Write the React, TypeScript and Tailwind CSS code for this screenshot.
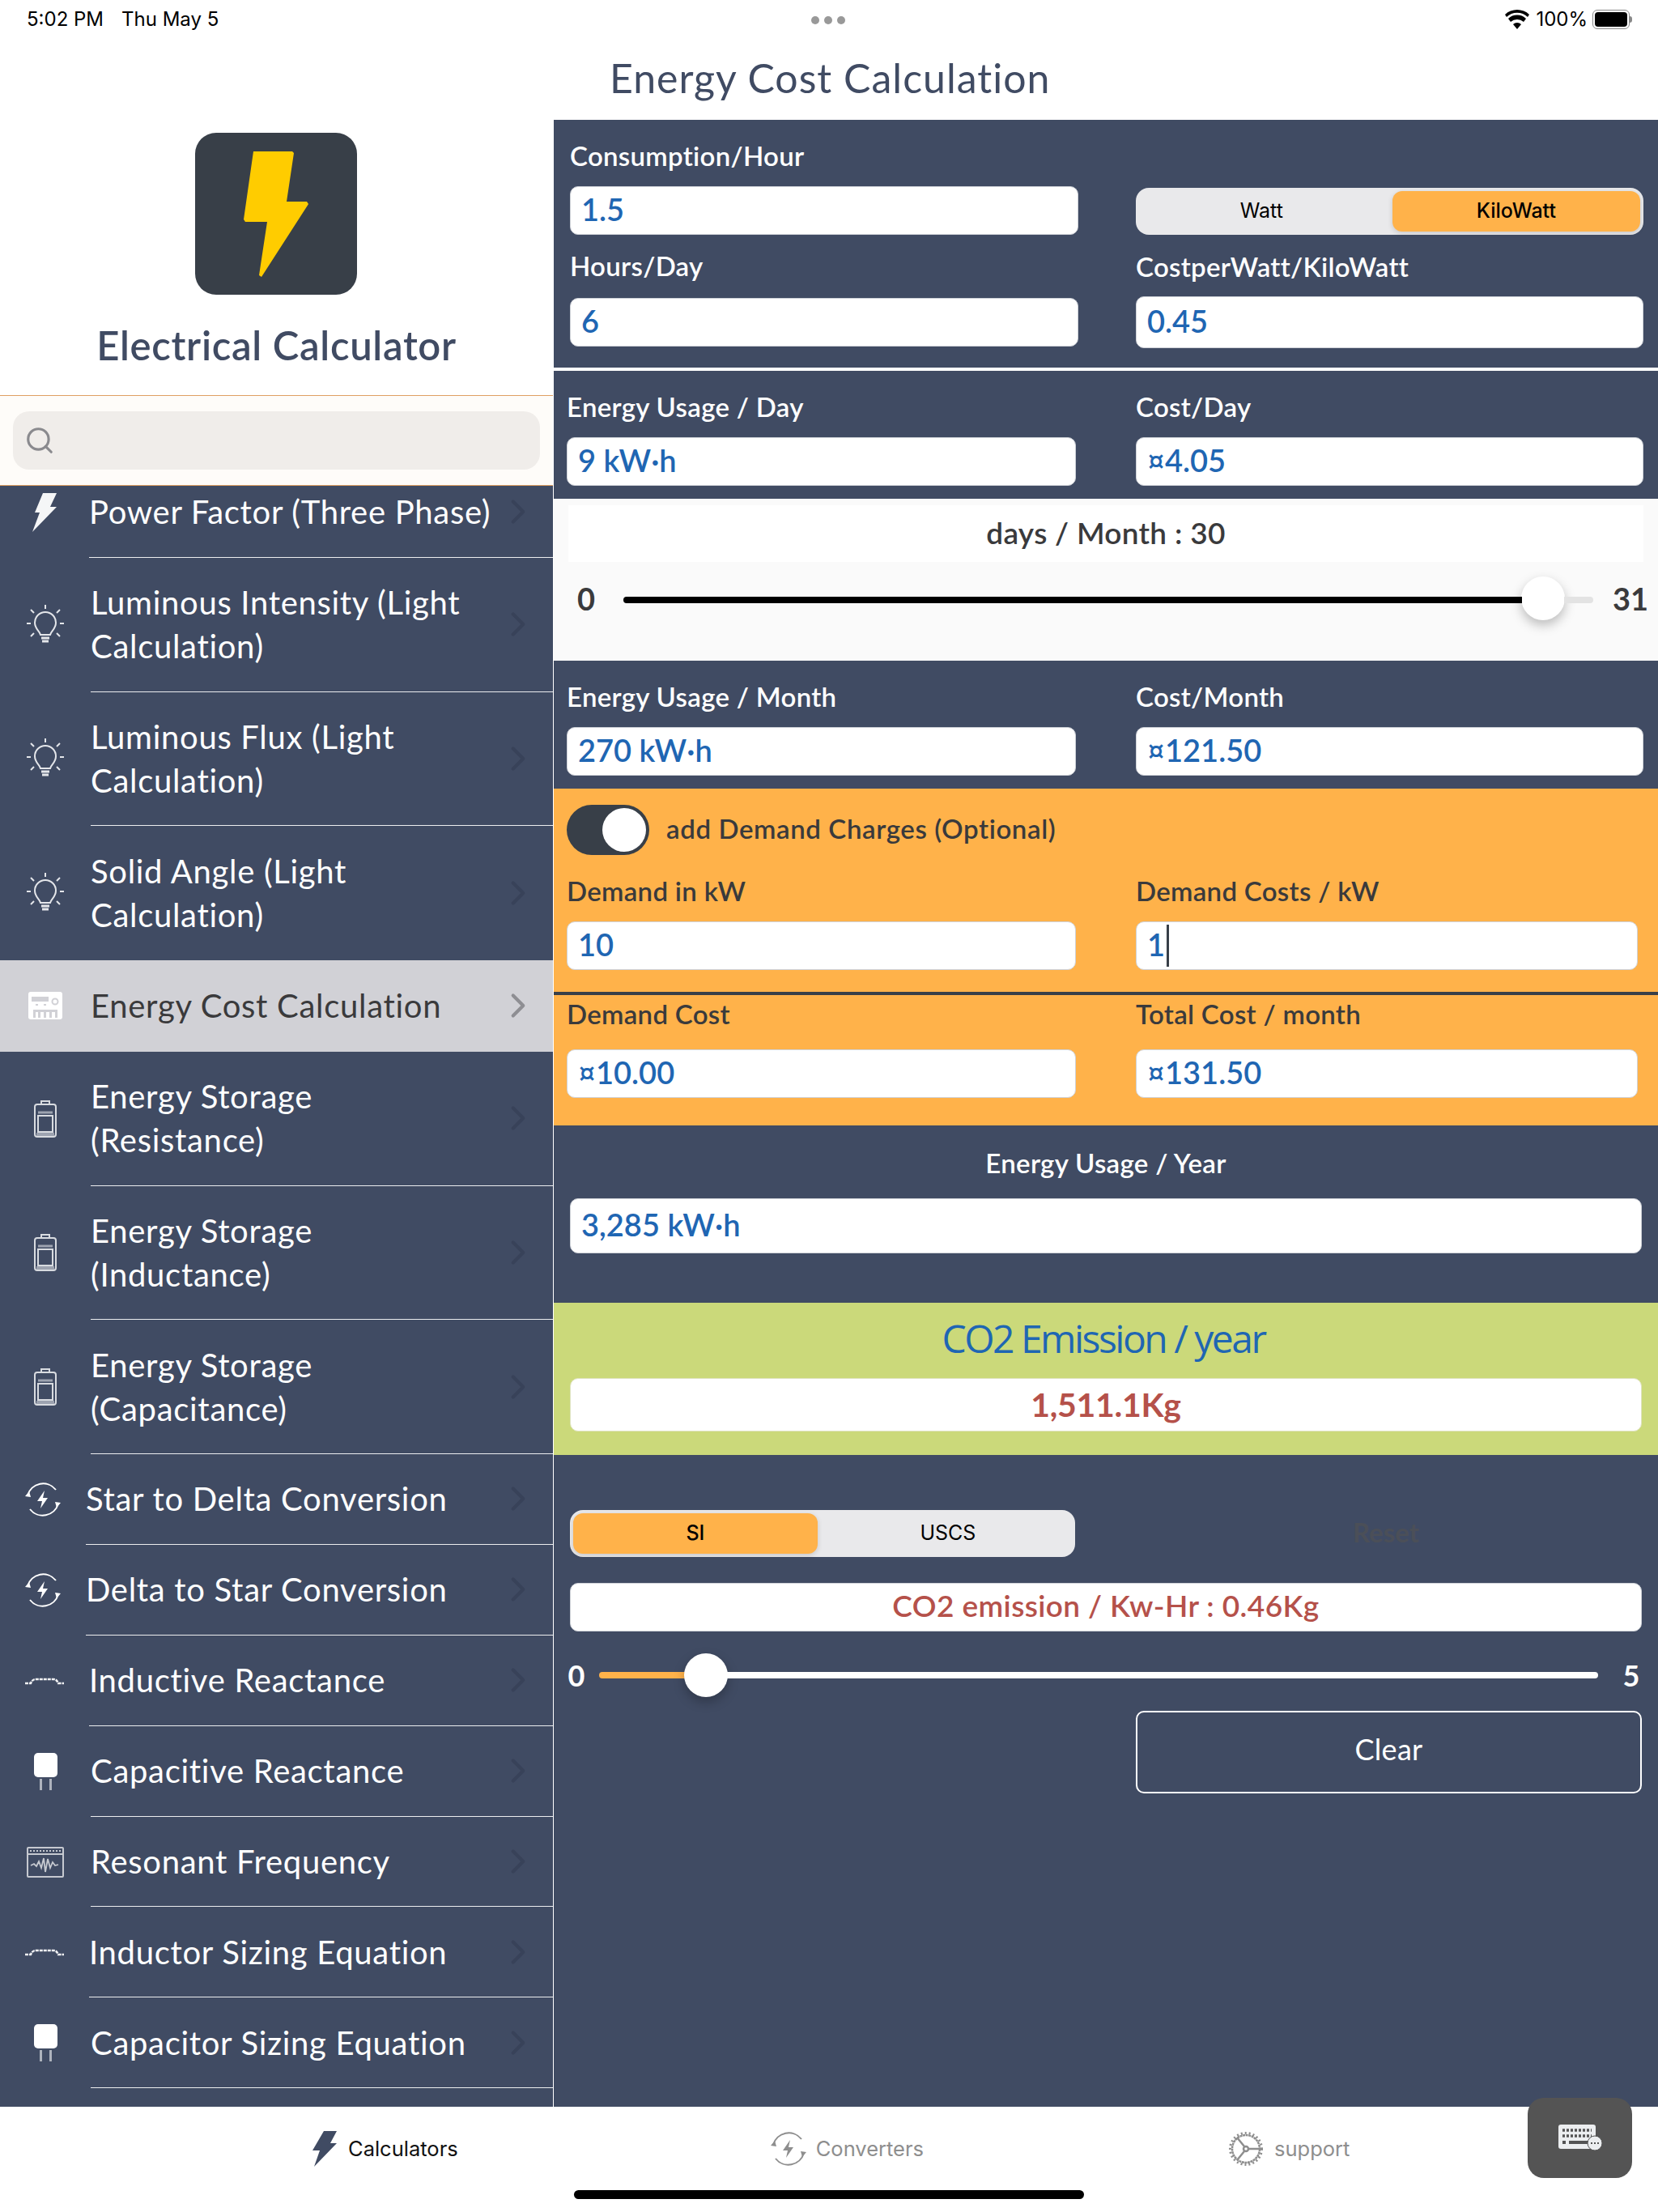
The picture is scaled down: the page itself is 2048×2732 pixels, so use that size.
import React from "react";
import { ChevronRight, Search } from "lucide-react";

const Bulb = () => (
  <svg width="46" height="50" viewBox="0 0 46 50" fill="none" stroke="#e4e6ea" strokeWidth="2">
    <path d="M17 37c-1-5-7-7-7-15a13 13 0 0 1 26 0c0 8-6 10-7 15z" />
    <path d="M18 41h10M19 45h8" strokeWidth="3" />
    <path d="M23 0v5M5 6l4 4M41 6l-4 4M0 23h5M41 23h5M5 39l4-4M41 39l-4-4" />
  </svg>
);

const Battery = () => (
  <svg width="28" height="46" viewBox="0 0 28 46" fill="none" stroke="#d8dbe0" strokeWidth="2">
    <path d="M9 5V1h10v4" />
    <rect x="1" y="5" width="26" height="40" rx="3" />
    <rect x="5" y="19" width="18" height="20" />
    <path d="M5 15h18" strokeWidth="3" stroke="#9da3b0" />
    <path d="M3 42h22" strokeWidth="4" stroke="#9da3b0" />
  </svg>
);

const Swap = ({ color = "#fff", size = 44 }: { color?: string; size?: number }) => (
  <svg width={size} height={size} viewBox="0 0 44 44" fill="none" stroke={color} strokeWidth="2">
    <path d="M3 17A20 20 0 0 1 38 10" />
    <path d="M41 27A20 20 0 0 1 6 34" />
    <path d="M0 18l5-6 2 7zM44 26l-5 6-2-7z" fill={color} stroke="none" />
    <path d="M24 11l-9 13h6l-2 9 9-13h-6z" fill={color} stroke="none" />
  </svg>
);

const Inductor = () => (
  <svg width="48" height="10" viewBox="0 0 48 10" fill="none" stroke="#f1f2f4" strokeWidth="2.5">
    <path d="M0 8h7q2-5 6-5h22q4 0 6 5h7" strokeDasharray="4 1" />
  </svg>
);

const Capacitor = () => (
  <svg width="29" height="46" viewBox="0 0 29 46">
    <rect x="0" y="0" width="29" height="30" rx="5" fill="#fff" />
    <rect x="7" y="32" width="3" height="14" fill="#aeb3bd" />
    <rect x="19" y="32" width="3" height="14" fill="#aeb3bd" />
  </svg>
);

const Wave = () => (
  <svg width="46" height="38" viewBox="0 0 46 38" fill="none" stroke="#c6c9d0" strokeWidth="2">
    <rect x="1" y="1" width="44" height="36" rx="1" />
    <path d="M2 9h42" />
    <path d="M4 5h38" strokeDasharray="2 2" />
    <path d="M5 23l4-2 3 3 3-6 3 8 3-12 2 17 3-16 3 11 3-7 3 4 4-1" strokeWidth="1.8" />
  </svg>
);

const Meter = () => (
  <svg width="42" height="34" viewBox="0 0 42 34">
    <rect width="42" height="34" rx="3" fill="#fff" />
    <rect x="4" y="6" width="21" height="6" fill="#d1d1d6" />
    <circle cx="33" cy="12" r="3.5" fill="none" stroke="#d1d1d6" strokeWidth="2" />
    <path d="M9 15h3v2H9zM19 15h3v2h-3z" fill="#d1d1d6" />
    <path d="M6 22h30v10h-3v-7h-4v7h-3v-7h-4v7h-3v-7h-4v7h-3v-7H9v7H6z" fill="#d1d1d6" />
  </svg>
);

const PowerBolt = () => (
  <svg width="30" height="48" viewBox="0 0 30 48">
    <path d="M13 0h17l-8 17h8L0 48l9-24H3z" fill="#fff" opacity="0.95" />
  </svg>
);

type Row = { label: React.ReactNode; icon: React.ReactNode; tall?: boolean; indent?: "wide" | "mid" | "narrow"; plain?: boolean };

const rows: Row[] = [
  { label: "Power Factor (Three Phase)", icon: <PowerBolt />, indent: "mid" },
  { label: <>Luminous Intensity (Light<br />Calculation)</>, icon: <Bulb />, tall: true },
  { label: <>Luminous Flux (Light<br />Calculation)</>, icon: <Bulb />, tall: true },
  { label: <>Solid Angle (Light<br />Calculation)</>, icon: <Bulb />, tall: true, plain: true },
];

const rowsAfter: Row[] = [
  { label: <>Energy Storage<br />(Resistance)</>, icon: <Battery />, tall: true },
  { label: <>Energy Storage<br />(Inductance)</>, icon: <Battery />, tall: true },
  { label: <>Energy Storage<br />(Capacitance)</>, icon: <Battery />, tall: true },
  { label: "Star to Delta Conversion", icon: <Swap />, indent: "narrow" },
  { label: "Delta to Star Conversion", icon: <Swap />, indent: "narrow" },
  { label: "Inductive Reactance", icon: <Inductor />, indent: "mid" },
  { label: "Capacitive Reactance", icon: <Capacitor /> },
  { label: "Resonant Frequency", icon: <Wave /> },
  { label: "Inductor Sizing Equation", icon: <Inductor />, indent: "mid" },
  { label: "Capacitor Sizing Equation", icon: <Capacitor /> },
];

function MenuRow({ row }: { row: Row }) {
  const iconBox = row.indent === "narrow" ? "w-[106px]" : row.indent === "mid" ? "w-[110px]" : "w-[112px]";
  return (
    <div className={`flex ${row.tall ? "h-[165.7px]" : "h-[111.9px]"}`}>
      <div className={`${iconBox} shrink-0 flex items-center justify-center`}>{row.icon}</div>
      <div className={`flex-1 flex items-center justify-between pr-[18px] ${row.plain ? "" : "border-b border-white/90"}`}>
        <div className="text-[40px] leading-[54px] tracking-[0.7px] text-white">{row.label}</div>
        <ChevronRight className="w-[50px] h-[50px] text-[#384259] shrink-0" strokeWidth={2} />
      </div>
    </div>
  );
}

function Sidebar() {
  return (
    <aside className="w-[683px] shrink-0 flex flex-col">
      <div className="h-[441px] flex flex-col items-center border-b border-[#dfa063] bg-white">
        <div className="mt-[116px] mr-[1px] w-[200px] h-[200px] rounded-[26px] bg-[#383f48] flex items-center justify-center">
          <svg width="80" height="156" viewBox="0 0 80 156">
            <path d="M12 1h48l2 2-9 60h25l2 3-58 90-3-2 10-66H2l-2-3z" fill="#ffcc00" />
          </svg>
        </div>
        <div className="mt-[30px] text-[49px] leading-[64px] font-semibold tracking-[0.7px] text-[#404b63]">Electrical Calculator</div>
      </div>
      <div className="h-[111px] bg-[#fefcf9] border-b border-[#dfa063] px-[16px] flex items-center">
        <div className="w-full h-[72px] rounded-[20px] bg-[#f0edea] flex items-center px-[14px]">
          <Search className="w-[38px] h-[38px] text-[#8a8a8e]" strokeWidth={2} />
        </div>
      </div>
      <div className="flex-1 overflow-hidden bg-[#404b63]">
        <div className="-mt-[23px]">
          {rows.map((r, i) => <MenuRow key={i} row={r} />)}
          <div className="flex h-[113px] bg-[#d1d1d6]">
            <div className="w-[112px] shrink-0 flex items-center justify-center"><Meter /></div>
            <div className="flex-1 flex items-center justify-between pr-[18px]">
              <div className="text-[40px] tracking-[0.7px] text-[#3a3a3c]">Energy Cost Calculation</div>
              <ChevronRight className="w-[50px] h-[50px] text-[#8e8e93] shrink-0" strokeWidth={2} />
            </div>
          </div>
          {rowsAfter.map((r, i) => <MenuRow key={i} row={r} />)}
        </div>
      </div>
    </aside>
  );
}

function Value({ children, className }: { children: React.ReactNode; className: string }) {
  return (
    <div className={`flex items-center rounded-[10px] bg-white border border-[#cfd2d8] pl-[13px] pb-[4px] text-[38px] font-semibold text-[#1f66b3] ${className}`}>
      {children}
    </div>
  );
}

function Label({ children, className = "text-white" }: { children: React.ReactNode; className?: string }) {
  return <div className={`h-[48px] pb-[3px] flex items-center text-[33px] font-semibold tracking-[0.3px] ${className}`}>{children}</div>;
}

function Segment({ left, right, active, className, onClass, offClass }: { left: string; right: string; active: "left" | "right"; className: string; onClass: string; offClass: string }) {
  const on = `${onClass} shrink-0 h-full flex items-center justify-center rounded-[12px] bg-[#ffb24a] text-black font-medium shadow-[0_2px_6px_rgba(0,0,0,0.15)]`;
  const off = `flex-1 h-full flex items-center justify-center text-black ${offClass}`;
  return (
    <div className={`flex items-center p-[4px] rounded-[16px] bg-[#e9e9eb] text-[25px] [font-family:Inter,sans-serif] ${className}`}>
      <div className={active === "left" ? on : off}>{left}</div>
      <div className={active === "right" ? on : off}>{right}</div>
    </div>
  );
}

function Thumb() {
  return <div className="w-[54px] h-[54px] rounded-full bg-white shrink-0 -mx-[1px] shadow-[0_6px_14px_rgba(0,0,0,0.25)]" />;
}

function Detail() {
  return (
    <main className="flex-1 flex flex-col min-w-0 ml-[1px]">
      <div className="h-[100px] flex items-center pl-[69px] pb-[4px] text-[50px] tracking-[1px] text-[#404b63]">Energy Cost Calculation</div>

      <section className="h-[306px] bg-[#404b63] flex pl-[20px] pt-[22px]">
        <div className="w-[628px]">
          <Label>Consumption/Hour</Label>
          <Value className="mt-[12px] h-[60px]">1.5</Value>
          <Label className="text-white mt-[16px]">Hours/Day</Label>
          <Value className="mt-[14px] h-[60px]">6</Value>
        </div>
        <div className="w-[627px] ml-[71px]">
          <Segment left="Watt" right="KiloWatt" active="right" className="mt-[62px] h-[58px]" onClass="w-[49.5%]" offClass="pr-[10px]" />
          <Label className="text-white mt-[17px]">CostperWatt/KiloWatt</Label>
          <Value className="mt-[11px] h-[64px]">0.45</Value>
        </div>
      </section>
      <div className="h-[4px] bg-white" />

      <section className="h-[158px] bg-[#404b63] flex pl-[16px] pt-[22px]">
        <div className="w-[629px]">
          <Label>Energy Usage / Day</Label>
          <Value className="mt-[12px] h-[60px]">9 kW·h</Value>
        </div>
        <div className="w-[627px] ml-[74px]">
          <Label>Cost/Day</Label>
          <Value className="mt-[12px] h-[60px]">¤4.05</Value>
        </div>
      </section>

      <section className="h-[200px] bg-[#fafafa] pt-[8px]">
        <div className="ml-[18px] w-[1328px] h-[70px] pb-[2px] bg-white flex items-center justify-center text-[37px] font-semibold tracking-[0.3px] text-[#3a3a3c]">days / Month : 30</div>
        <div className="flex items-center h-[90px] text-[38px] font-bold text-[#3a3a3c]">
          <div className="w-[78px] pl-[2px] text-center">0</div>
          <div className="w-[1206px] pl-[8px] flex items-center">
            <div className="flex-1 h-[8px] rounded-l-full bg-black translate-y-[2px]" />
            <Thumb />
            <div className="w-[36px] h-[8px] rounded-r-full bg-[#e3e3e3] translate-y-[2px]" />
          </div>
          <div className="flex-1 text-center pl-[12px]">31</div>
        </div>
      </section>

      <section className="h-[158px] bg-[#404b63] flex pl-[16px] pt-[22px]">
        <div className="w-[629px]">
          <Label>Energy Usage / Month</Label>
          <Value className="mt-[12px] h-[60px]">270 kW·h</Value>
        </div>
        <div className="w-[627px] ml-[74px]">
          <Label>Cost/Month</Label>
          <Value className="mt-[12px] h-[60px]">¤121.50</Value>
        </div>
      </section>

      <section className="h-[416px] bg-[#ffb24a] flex flex-col">
        <div className="flex items-center pl-[16px] pt-[20px]">
          <div className="w-[102px] h-[62px] rounded-full bg-[#383f48] flex items-center justify-end pr-[4px]">
            <div className="w-[54px] h-[54px] rounded-full bg-white" />
          </div>
          <div className="ml-[21px] pb-[2px] text-[33px] font-semibold tracking-[0.6px] text-[#3a3a3c]">add Demand Charges (Optional)</div>
        </div>
        <div className="flex pl-[16px] pt-[22px]">
          <div className="w-[629px]">
            <Label className="text-[#3a3a3c]">Demand in kW</Label>
            <Value className="mt-[12px] h-[60px]">10</Value>
          </div>
          <div className="w-[620px] ml-[74px]">
            <Label className="text-[#3a3a3c]">Demand Costs / kW</Label>
            <Value className="mt-[12px] h-[60px]">
              1<span className="ml-[2px] w-[3px] h-[52px] mt-[4px] bg-[#383f48]" />
            </Value>
          </div>
        </div>
        <div className="h-[4px] bg-[#383f48] mt-[27px]" />
        <div className="flex pl-[16px]">
          <div className="w-[629px]">
            <Label className="text-[#3a3a3c] mt-[1px]">Demand Cost</Label>
            <Value className="mt-[18px] h-[60px]">¤10.00</Value>
          </div>
          <div className="w-[620px] ml-[74px]">
            <Label className="text-[#3a3a3c] mt-[1px]">Total Cost / month</Label>
            <Value className="mt-[18px] h-[60px]">¤131.50</Value>
          </div>
        </div>
      </section>

      <section className="h-[219px] bg-[#404b63] flex flex-col pt-[24px] px-[20px]">
        <Label className="text-white justify-center">Energy Usage / Year</Label>
        <Value className="mt-[18px] h-[68px] w-[1324px]">3,285 kW·h</Value>
      </section>

      <section className="h-[188px] bg-[#cbd97a] flex flex-col items-center px-[20px] pt-[14px]">
        <div className="h-[60px] pr-[6px] flex items-center text-[48px] leading-none text-[#1f66b3] [font-family:'Open_Sans',sans-serif] tracking-[-2.5px]">CO2 Emission / year</div>
        <div className="mt-[19px] w-full h-[66px] rounded-[10px] bg-white border border-[#dfe3c0] flex items-center justify-center text-[41px] font-bold tracking-[-0.3px] text-[#b5514a]">1,511.1Kg</div>
      </section>

      <section className="flex-1 bg-[#404b63] flex flex-col px-[20px] pt-[68px]">
        <div className="flex items-center h-[58px]">
          <Segment left="SI" right="USCS" active="left" className="w-[624px] h-[58px]" onClass="w-[49%]" offClass="pl-[8px]" />
          <div className="flex-1 pl-[68px] pb-[2px] text-center text-[33px] font-bold text-[#4b4f58]">Reset</div>
        </div>
        <div className="mt-[32px] h-[60px] pb-[5px] rounded-[10px] bg-white border border-[#cfd2d8] flex items-center justify-center text-[37px] font-semibold tracking-[0.4px] text-[#b5514a]">CO2 emission / Kw-Hr : 0.46Kg</div>
        <div className="-mx-[20px] mt-[27px] h-[54px] flex items-center text-[36px] font-bold text-white">
          <div className="w-[56px] text-center">0</div>
          <div className="w-[1234px] flex items-center">
            <div className="w-[106px] h-[8px] rounded-l-full bg-[#ffb24a]" />
            <Thumb />
            <div className="flex-1 h-[8px] rounded-r-full bg-white" />
          </div>
          <div className="flex-1 text-center pl-[8px]">5</div>
        </div>
        <div className="mt-[17px] ml-[699px] w-[625px] h-[102px] pb-[8px] rounded-[10px] border-2 border-white flex items-center justify-center text-[36px] tracking-[0.3px] text-white">Clear</div>
      </section>
    </main>
  );
}

function TabBar() {
  return (
    <footer className="relative h-[130px] shrink-0 bg-white [font-family:Inter,sans-serif] text-[25.5px]">
      <div className="flex h-[104px]">
        <div className="ml-[385px] flex items-center">
          <svg width="32" height="44" viewBox="0 0 30 44"><path d="M14 0h16l-8 15h8L2 44l7-20H0z" fill="#404b63" /></svg>
          <span className="ml-[13px] text-[#111]">Calculators</span>
        </div>
        <div className="ml-[386px] flex items-center text-[#8e8e8e]">
          <Swap color="#8e8e8e" size={44} />
          <span className="ml-[12px]">Converters</span>
        </div>
        <div className="ml-[377px] flex items-center text-[#8e8e8e]">
          <svg width="42" height="42" viewBox="0 0 42 42" fill="none" stroke="#8e8e8e" strokeWidth="2.5">
            <circle cx="21" cy="21" r="17" strokeDasharray="3 0.6" />
            <circle cx="21" cy="21" r="19.5" strokeWidth="3" strokeDasharray="2 3" />
            <circle cx="21" cy="21" r="3" />
            <path d="M24 21h15M19 18L10 7M19 24l-9 11" />
          </svg>
          <span className="ml-[14px]">support</span>
        </div>
      </div>
      <div className="mx-auto w-[630px] h-[11px] rounded-full bg-black -mt-[1px]" />
      {/* floating keyboard key, sits over the tab bar edge */}
      <div className="absolute left-[1887px] -top-[11px] w-[129px] h-[99px] rounded-[20px] bg-[#545454] flex items-center justify-center">
        <svg width="56" height="34" viewBox="0 0 56 34" className="ml-[2px]">
          <rect x="0" y="0" width="46" height="30" rx="3" fill="#eceef0" />
          <path d="M5 7h36M5 14h36" stroke="#545454" strokeWidth="3.5" strokeDasharray="3 2" />
          <path d="M5 22h4M13 22h24" stroke="#545454" strokeWidth="4" />
          <circle cx="45" cy="23" r="9" fill="#eceef0" stroke="#545454" strokeWidth="1" />
          <path d="M40 23h2M44 23h2M48 23h2" stroke="#545454" strokeWidth="2" />
        </svg>
      </div>
    </footer>
  );
}

export default function App() {
  return (
    <div className="w-[2048px] h-[2732px] flex flex-col overflow-hidden bg-white [font-family:Lato,'Noto_Sans',sans-serif]">
      <header className="relative h-[48px] shrink-0 flex items-center justify-between pl-[33px] pr-[32px] text-[24px] text-black [font-family:Inter,sans-serif]">
        <div className="flex gap-[22px]">
          <span>5:02 PM</span>
          <span>Thu May 5</span>
        </div>
        <div className="absolute left-[1002px] top-[20px] flex gap-[6px]">
          <span className="w-[10px] h-[10px] rounded-full bg-[#999]" />
          <span className="w-[10px] h-[10px] rounded-full bg-[#999]" />
          <span className="w-[10px] h-[10px] rounded-full bg-[#999]" />
        </div>
        <div className="flex items-center">
          <svg width="30" height="24" viewBox="0 0 30 24">
            <path d="M15 24l-5-6a7 7 0 0 1 10 0zM7 15l-3-4a16 16 0 0 1 22 0l-3 4a12 12 0 0 0-16 0zM2 9L0 6a22 22 0 0 1 30 0l-2 3a19 19 0 0 0-26 0z" fill="#000" />
          </svg>
          <span className="ml-[8px] mr-[6px]">100%</span>
          <div className="w-[46px] h-[24px] rounded-[6px] border border-[#888] p-[2px]">
            <div className="w-full h-full rounded-[4px] bg-black" />
          </div>
          <div className="w-[3px] h-[8px] rounded-r-full bg-[#888]" />
        </div>
      </header>
      <div className="flex-1 flex min-h-0">
        <Sidebar />
        <Detail />
      </div>
      <TabBar />
    </div>
  );
}
